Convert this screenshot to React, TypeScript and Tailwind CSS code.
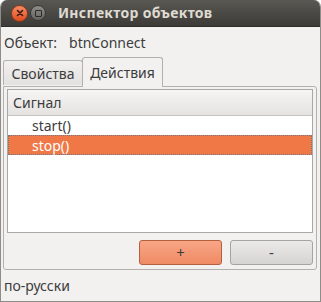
import React from "react";

const font = { fontFamily: '"Noto Sans", "DejaVu Sans", sans-serif' };

export default function App() {
  return (
    <div
      className="w-[321px] h-[302px] flex flex-col bg-[#f2f1f0] rounded-t-[7px] overflow-hidden border-x border-b border-[#8f8d8a] text-[#3c3c3c] text-[14px]"
      style={font}
    >
      {/* title bar */}
      <div className="h-[27px] shrink-0 flex items-center bg-gradient-to-b from-[#5a5853] to-[#3c3b37] border-b border-[#2f2e2b]">
        <div className="ml-[10px] w-[17px] h-[17px] rounded-full bg-gradient-to-b from-[#f58b62] to-[#df4a1e] flex items-center justify-center border border-[#8c3818]">
          <svg width="8" height="8" viewBox="0 0 8 8">
            <path d="M1.5 1.5 L6.5 6.5 M6.5 1.5 L1.5 6.5" stroke="#3a1a0e" strokeWidth="1.6" strokeLinecap="round" />
          </svg>
        </div>
        <div className="ml-[2px] w-[16px] h-[16px] rounded-full bg-gradient-to-b from-[#8f8d89] to-[#66645f] flex items-center justify-center border border-[#3a3935]">
          <div className="w-[7px] h-[7px] border-[1.5px] border-[#2c2b28] rounded-[1px]" />
        </div>
        <div className="ml-[12px] text-[14px] font-bold text-[#dfdbd2] leading-none tracking-[0.3px]">
          Инспектор объектов
        </div>
      </div>

      <div className="flex-1 flex flex-col pl-[2px] pr-[3px]">
        {/* object row */}
        <div className="h-[30px] flex items-center pl-[1px] shrink-0">
          <span>Объект:</span>
          <span className="ml-[12px]">btnConnect</span>
        </div>

        {/* tabs */}
        <div className="flex items-end h-[29px] shrink-0 relative z-10">
          <div className="h-[25px] w-[80px] flex items-center justify-center border border-[#b3b1ae] border-b-0 rounded-t-[3px] bg-gradient-to-b from-[#f2f1f0] to-[#e2e1df] mb-[1px]">
            Свойства
          </div>
          <div className="h-[30px] w-[81px] flex items-center justify-center border border-[#b3b1ae] border-b-0 rounded-t-[3px] bg-[#f2f1f0] -mb-[1px] -ml-[1px]">
            Действия
          </div>
        </div>

        {/* panel */}
        <div className="h-[184px] shrink-0 border border-[#b3b1ae] rounded-b-[3px] rounded-tr-[3px] flex flex-col pt-[2px] px-[3px] pb-[4px]">
          <div className="h-[144px] shrink-0 border border-[#a9a8a6] bg-white flex flex-col">
            <div className="h-[26px] shrink-0 flex items-center pl-[5px] bg-gradient-to-b from-[#f6f5f4] to-[#e4e3e1] border-b border-[#c5c3c0]">
              Сигнал
            </div>
            <div className="h-[19px] flex items-center pl-[24px] text-[#3c3c3c]">start()</div>
            <div className="h-[20px] flex items-center pl-[23px] bg-[#f07746] text-white border border-dotted border-[#6e7a8a]">
              stop()
            </div>
          </div>
          <div className="flex-1 flex items-end justify-end gap-[8px]">
            <button className="w-[83px] h-[25px] rounded-[3px] border border-[#b3603f] bg-gradient-to-b from-[#f8a587] to-[#ef8b63] text-[#3c3c3c] flex items-center justify-center text-[15px] leading-none">
              +
            </button>
            <button className="w-[83px] h-[25px] rounded-[3px] border border-[#a6a4a1] bg-gradient-to-b from-[#ebeae9] to-[#d5d4d2] text-[#3c3c3c] flex items-center justify-center text-[15px] leading-none">
              -
            </button>
          </div>
        </div>

        {/* status */}
        <div className="flex-1 flex items-center pl-[1px]">по-русски</div>
      </div>
    </div>
  );
}
